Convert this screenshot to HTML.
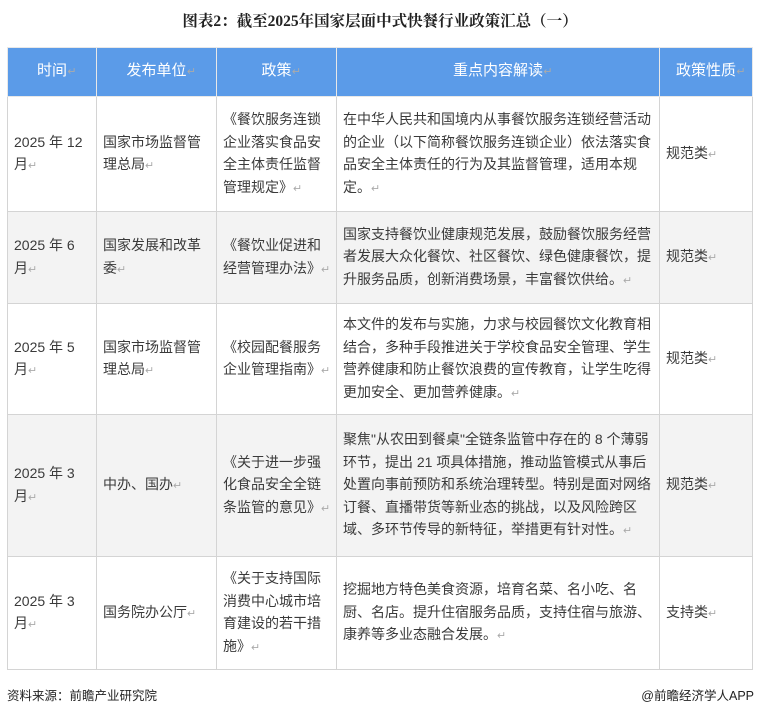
<!DOCTYPE html>
<html><head><meta charset="utf-8"><style>
body{margin:0;width:760px;height:716px;background:#fff;font-family:"Liberation Sans","Noto Sans CJK SC",sans-serif;color:#3a3a3a;position:relative;overflow:hidden}
.title{position:absolute;top:9px;left:0;width:760px;text-align:center;font-size:15.5px;font-weight:bold;color:#222;font-family:"Liberation Serif","Noto Serif CJK SC",serif}
table{position:absolute;left:7px;top:47px;border-collapse:collapse;table-layout:fixed;width:745px}
td,th{border:1px solid #d4d4d4;font-size:14px;line-height:22.5px;padding:0 6px;vertical-align:middle;text-align:left;word-break:break-all}
th{background:#5b9be8;color:#fff;font-weight:normal;text-align:center;height:48px;font-size:15px;border-color:#e8e8e8}
tr.g td{background:#f3f3f3}
.foot{position:absolute;top:685px;font-size:12.5px;color:#222}
.r{color:#aaa;font-size:11px;display:inline-block;width:10px;margin-right:-10px}
</style></head><body>
<div class="title">图表2：截至2025年国家层面中式快餐行业政策汇总（一）</div>
<table>
<colgroup><col style="width:89px"><col style="width:120px"><col style="width:120px"><col style="width:323px"><col style="width:93px"></colgroup>
<tr><th>时间<span class="r">↵</span></th><th>发布单位<span class="r">↵</span></th><th>政策<span class="r">↵</span></th><th>重点内容解读<span class="r">↵</span></th><th>政策性质<span class="r">↵</span></th></tr>
<tr style="height:115px"><td>2025 年 12 月<span class="r">↵</span></td><td>国家市场监督管理总局<span class="r">↵</span></td><td>《餐饮服务连锁企业落实食品安全主体责任监督管理规定》<span class="r">↵</span></td><td>在中华人民共和国境内从事餐饮服务连锁经营活动的企业（以下简称餐饮服务连锁企业）依法落实食品安全主体责任的行为及其监督管理，适用本规定。<span class="r">↵</span></td><td>规范类<span class="r">↵</span></td></tr>
<tr class="g" style="height:92px"><td>2025 年 6 月<span class="r">↵</span></td><td>国家发展和改革委<span class="r">↵</span></td><td>《餐饮业促进和经营管理办法》<span class="r">↵</span></td><td>国家支持餐饮业健康规范发展，鼓励餐饮服务经营者发展大众化餐饮、社区餐饮、绿色健康餐饮，提升服务品质，创新消费场景，丰富餐饮供给。<span class="r">↵</span></td><td>规范类<span class="r">↵</span></td></tr>
<tr style="height:111px"><td>2025 年 5 月<span class="r">↵</span></td><td>国家市场监督管理总局<span class="r">↵</span></td><td>《校园配餐服务企业管理指南》<span class="r">↵</span></td><td>本文件的发布与实施，力求与校园餐饮文化教育相结合，多种手段推进关于学校食品安全管理、学生营养健康和防止餐饮浪费的宣传教育，让学生吃得更加安全、更加营养健康。<span class="r">↵</span></td><td>规范类<span class="r">↵</span></td></tr>
<tr class="g" style="height:142px"><td>2025 年 3 月<span class="r">↵</span></td><td>中办、国办<span class="r">↵</span></td><td>《关于进一步强化食品安全全链条监管的意见》<span class="r">↵</span></td><td>聚焦"从农田到餐桌"全链条监管中存在的 8 个薄弱环节，提出 21 项具体措施，推动监管模式从事后处置向事前预防和系统治理转型。特别是面对网络订餐、直播带货等新业态的挑战，以及风险跨区域、多环节传导的新特征，举措更有针对性。<span class="r">↵</span></td><td>规范类<span class="r">↵</span></td></tr>
<tr style="height:113px"><td>2025 年 3 月<span class="r">↵</span></td><td>国务院办公厅<span class="r">↵</span></td><td>《关于支持国际消费中心城市培育建设的若干措施》<span class="r">↵</span></td><td>挖掘地方特色美食资源，培育名菜、名小吃、名厨、名店。提升住宿服务品质，支持住宿与旅游、康养等多业态融合发展。<span class="r">↵</span></td><td>支持类<span class="r">↵</span></td></tr>
</table>
<div class="foot" style="left:7px">资料来源：前瞻产业研究院</div>
<div class="foot" style="right:6px">@前瞻经济学人APP</div>
</body></html>
